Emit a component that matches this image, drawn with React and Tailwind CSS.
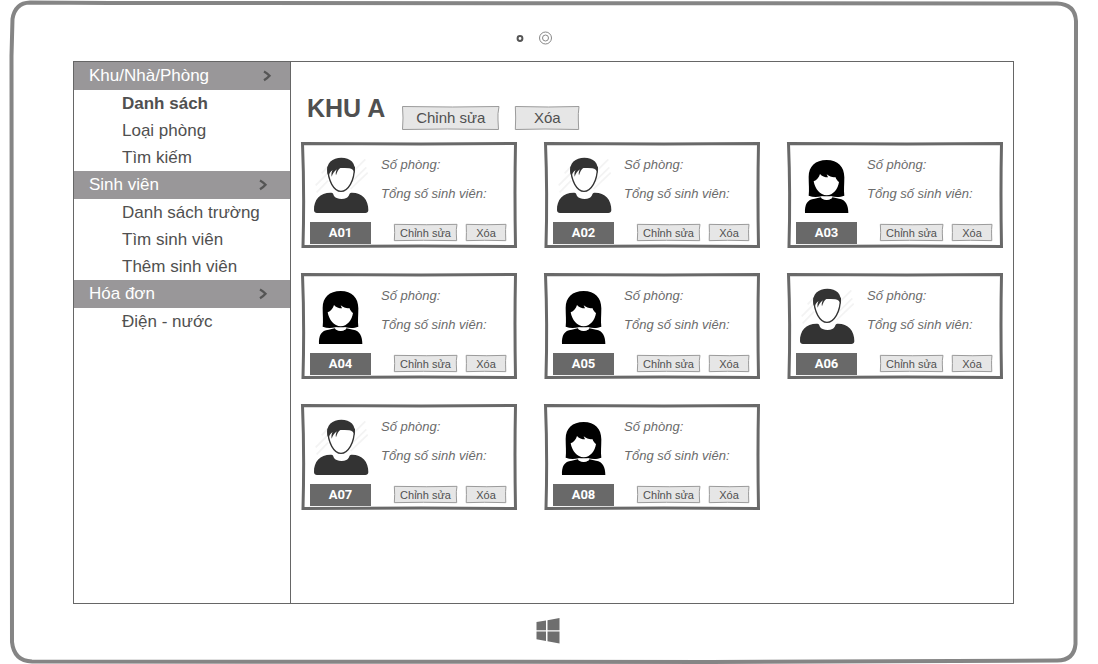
const menu = [
  {
    title: 'Khu/Nhà/Phòng',
    inset: 'pr-[18px]',
    items: ['Danh sách', 'Loại phòng', 'Tìm kiếm'],
  },
  {
    title: 'Sinh viên',
    inset: 'pr-[22px]',
    items: ['Danh sách trường', 'Tìm sinh viên', 'Thêm sinh viên'],
  },
  { title: 'Hóa đơn', inset: 'pr-[22px]', items: ['Điện - nước'] },
];

const activeItem = 'Danh sách';

const rooms = [
  { code: 'A01', gender: 'male' },
  { code: 'A02', gender: 'male' },
  { code: 'A03', gender: 'female' },
  { code: 'A04', gender: 'female' },
  { code: 'A05', gender: 'female' },
  { code: 'A06', gender: 'male' },
  { code: 'A07', gender: 'male' },
  { code: 'A08', gender: 'female' },
];

// Hand-drawn outline that stretches with the box it decorates.
function Outline({ viewBox, d, className }) {
  return (
    <svg
      aria-hidden="true"
      viewBox={viewBox}
      preserveAspectRatio="none"
      className={`pointer-events-none absolute inset-0 -z-10 h-full w-full overflow-visible ${className}`}
    >
      <path d={d} vectorEffect="non-scaling-stroke" />
    </svg>
  );
}

function SketchButton({ className, children }) {
  return (
    <button type="button" className={`relative isolate flex items-center justify-center ${className}`}>
      <Outline
        viewBox="0 0 96 24"
        d="M0.5 0.5 L50 1 L96 0.5 Q94.5 8 95 14 L95.5 23.5 L45 23 L0.5 23.5 Q1.5 12 0.5 0.5 Z"
        className="fill-[#e6e6e6] stroke-[#9b9b9b] stroke-1"
      />
      {children}
    </button>
  );
}

function MaleAvatar() {
  return (
    <svg viewBox="36 48 174 174" className="size-[58px]" aria-hidden="true">
      <path
        d="M47 136 L92 91 M50 157 L84 122 M65 100 L84 80 M150 130 L199 82 M152 147 L203 98 M163 91 L196 58"
        fill="none"
        stroke="#f3f3f3"
        strokeWidth="5"
      />
      <path
        d="M84 82 C83 122 102 154 123 154 C144 154 164 122 163 82 Z"
        fill="#fff"
        stroke="#333"
        strokeWidth="4"
      />
      <path
        d="M82 100 C77 68 98 53 124 53 C151 53 169 68 164 100 C162 90 156 87 148 85 C139 84 130 83 122 83 C115 87 111 96 108 106 C106 100 108 93 111 88 C103 93 98 101 95 110 C93 102 95 95 98 90 C91 94 87 101 86 110 Z"
        fill="#333"
      />
      <path
        d="M42 211 C41 178 61 157 94 158 C104 160 96 167 110 174 C119 178 131 178 139 174 C151 167 145 159 154 158 C185 157 206 178 205 211 Q204 219 196 219 L51 219 Q43 219 42 211 Z"
        fill="#333"
      />
    </svg>
  );
}

function FemaleAvatar() {
  return (
    <svg viewBox="51 63 174 174" className="size-[58px]" aria-hidden="true">
      <path
        d="M83 182 C85 164 83 148 83 126 C83 94 103 75 137 75 C171 75 190 95 190 127 C190 149 188 165 190 182 C177 187 163 186 151 184 L122 184 C109 186 96 187 83 182 Z"
        fill="#000"
      />
      <path
        d="M72 234 C71 209 78 193 101 191 L119 187 Q137 202 155 187 L174 191 C195 194 202 211 202 234 Z"
        fill="#000"
      />
      <path
        d="M98 139 C107 135 114 128 117 117 C122 124 132 127 141 127 L137 118 C146 125 157 128 163 126 C166 134 170 138 174 141 C171 161 157 181 137 181 C117 181 102 161 98 139 Z"
        fill="#fff"
      />
      <path d="M122 184 Q137 190 152 184 L153 190 Q137 200 121 190 Z" fill="#fff" />
    </svg>
  );
}

function RoomCard({ code, gender }) {
  return (
    <li className="relative isolate flex h-[106px] pb-1 pl-[9px] pr-[11px] pt-[14px]">
      <Outline
        viewBox="0 0 216 106"
        d="M1.5 1.5 L120 2 L214.5 1.5 Q213.5 50 214.5 104.5 L120 104 L2 104.5 Q3.5 50 1.5 1.5 Z"
        className="fill-white stroke-[#696969] stroke-3"
      />
      <div className="flex w-[61px] flex-col items-center justify-between">
        {gender === 'male' ? <MaleAvatar /> : <FemaleAvatar />}
        <h2 className="w-full bg-[#696969] text-center font-['Roboto',sans-serif] text-[13px] font-bold leading-[22px] text-white">
          {code}
        </h2>
      </div>
      <div className="flex min-w-0 flex-1 flex-col justify-between pb-[3px]">
        <dl className="whitespace-nowrap pl-[10px] text-[13px] italic leading-[18px] text-[#6b6b6b]">
          <dt className="mb-[11px]">Số phòng:</dt>
          <dt>Tổng số sinh viên:</dt>
        </dl>
        <div className="flex justify-end gap-[9px] text-[11px] leading-4 text-[#505050]">
          <SketchButton className="h-[17px] w-[63px]">Chỉnh sửa</SketchButton>
          <SketchButton className="h-[17px] w-10">Xóa</SketchButton>
        </div>
      </div>
    </li>
  );
}

function Sidebar() {
  return (
    <nav className="w-[217px] shrink-0 border-r border-[#666666] text-[17px] text-[#505050]">
      {menu.map((group) => (
        <section key={group.title}>
          <button
            type="button"
            className={`flex h-7 w-full items-center justify-between bg-[#999799] pl-[15px] text-white ${group.inset}`}
          >
            {group.title}
            <svg viewBox="0 0 10 12" className="h-3 w-[10px]" fill="none" stroke="#555" strokeWidth="2.4" aria-hidden="true">
              <path d="M2 1.5 Q5 3 7.5 5.7 Q5 8.5 2 10.2" />
            </svg>
          </button>
          <ul>
            {group.items.map((item) => (
              <li key={item}>
                <a
                  href="#"
                  className={`flex h-[27px] items-center pl-12 ${item === activeItem ? 'font-bold' : ''}`}
                >
                  {item}
                </a>
              </li>
            ))}
          </ul>
        </section>
      ))}
    </nav>
  );
}

export default function App() {
  return (
    <div className="flex min-h-screen bg-white pl-[10px] pr-5 pt-px font-['Liberation_Sans',Arial,sans-serif]">
      <div className="relative isolate flex flex-1 flex-col pl-[63px] pr-16">
        <Outline
          viewBox="0 0 1068 663"
          d="M2.5 18 Q5 2 20 1.5 L100 2 L1047 2.5 Q1065 3 1066 20 L1065.5 643 Q1064 660 1046 659.5 L700 661 L22 660.5 Q4 660 2 641 L1.5 55 Z"
          className="fill-none stroke-[#858585] stroke-4"
        />
        <header className="flex h-[60px] items-center justify-center pr-5 pt-[14px]">
          <svg viewBox="0 0 36 16" className="h-4 w-9" fill="none" aria-hidden="true">
            <circle cx="4" cy="8.5" r="2.4" stroke="#555" strokeWidth="2" />
            <circle cx="29.5" cy="8" r="6" stroke="#888" />
            <circle cx="29.5" cy="8" r="3" stroke="#888" />
          </svg>
        </header>

        <div className="flex flex-1 border border-[#666666]">
          <Sidebar />
          <main className="flex-1 pb-8 pl-[10px] pt-8">
            <div className="mb-3 flex h-9 items-end pl-[6px] text-[#505050]">
              <h1 className="mr-[17px] self-start text-[25px] font-bold leading-7">KHU A</h1>
              <div className="flex gap-4 text-[15px]">
                <SketchButton className="h-6 w-[97px]">Chỉnh sửa</SketchButton>
                <SketchButton className="h-6 w-16">Xóa</SketchButton>
              </div>
            </div>
            <ul className="grid grid-cols-[repeat(auto-fill,216px)] gap-x-[27px] gap-y-[25px]">
              {rooms.map((room) => (
                <RoomCard key={room.code} {...room} />
              ))}
            </ul>
          </main>
        </div>

        <footer className="flex h-[60px] items-center justify-center pb-[6px] pl-2">
          <button type="button" aria-label="Windows">
            <svg viewBox="0 0 24 26" className="h-[26px] w-6" fill="#6e6e6e" aria-hidden="true">
              <path d="M0.5 4 L10 2.5 V12.2 H0.5 Z M11.5 2.2 L23.5 0 V12.2 H11.5 Z M0.5 13.6 H10 V23 L0.5 21.3 Z M11.5 13.6 H23.5 V25.5 L11.5 23.3 Z" />
            </svg>
          </button>
        </footer>
      </div>
    </div>
  );
}
